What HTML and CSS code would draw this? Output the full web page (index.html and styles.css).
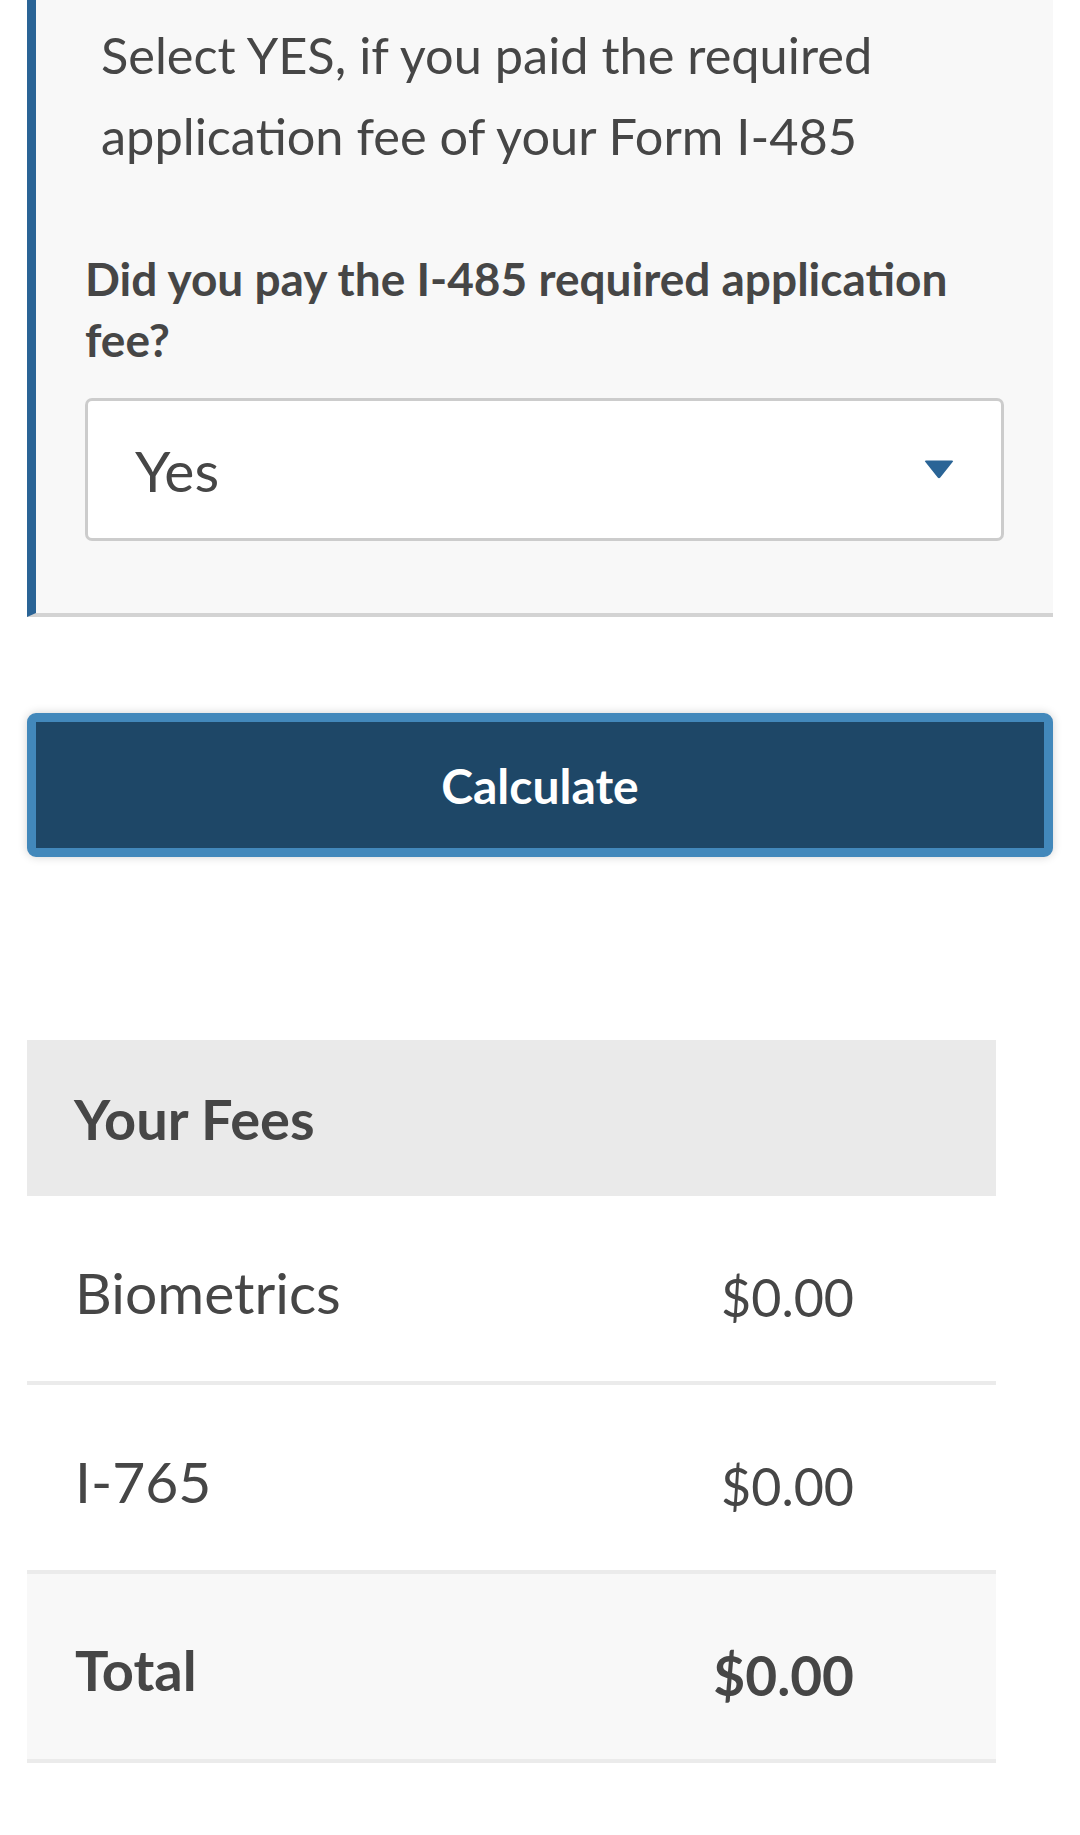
FILE: index.html
```html
<!DOCTYPE html>
<html lang="en">
<head>
<meta charset="utf-8">
<title>Fee Calculator</title>
<link rel="stylesheet" href="styles.css">
</head>
<body>
<main class="page">
  <section class="question-box">
    <p class="intro">Select YES, if you paid the required application fee of your Form I-485</p>
    <label class="q-label" for="paid">Did you pay the I-485 required application fee?</label>
    <div class="select">
      <span class="select-value" id="paid">Yes</span>
      <svg class="select-arrow" width="30" height="19" viewBox="0 0 30 19" aria-hidden="true">
        <path d="M2 0.5 H28 Q30 0.5 28.6 2 L16.3 17.6 Q15 19 13.7 17.6 L1.4 2 Q0 0.5 2 0.5 Z" fill="#2a6496"/>
      </svg>
    </div>
  </section>

  <button class="calc-btn" type="button">Calculate</button>

  <section class="fees">
    <div class="fees-head">Your Fees</div>
    <div class="fee-row">
      <span class="fee-name">Biometrics</span>
      <span class="fee-amount">$0.00</span>
    </div>
    <div class="fee-row">
      <span class="fee-name">I-765</span>
      <span class="fee-amount">$0.00</span>
    </div>
    <div class="fee-row fee-total">
      <span class="fee-name">Total</span>
      <span class="fee-amount">$0.00</span>
    </div>
  </section>
</main>
</body>
</html>
```
FILE: styles.css
```css
* { box-sizing: border-box; }

html, body {
  margin: 0;
  padding: 0;
  background: #ffffff;
}

body {
  font-family: "Lato", "Liberation Sans", sans-serif;
  color: #464646;
}

.page {
  padding: 0 27px;
}

/* grey question box with blue left rule */
.question-box {
  background: #f8f8f8;
  border-left: 9px solid #2a6496;
  border-bottom: 4px solid #d3d3d3;
  padding: 14px 49px 72px 49px;
}

.intro {
  margin: 0;
  padding-left: 16px;
  font-size: 50.5px;
  line-height: 81px;
  font-weight: 400;
  color: #464646;
}

.q-label {
  display: block;
  margin-top: 72px;
  font-size: 46px;
  line-height: 61px;
  font-weight: 700;
  color: #464646;
}

.select {
  margin-top: 28px;
  height: 143px;
  background: #ffffff;
  border: 3px solid #cccccc;
  border-radius: 7px;
  display: flex;
  align-items: center;
  justify-content: space-between;
  padding: 0 47px 0 47px;
}

.select-value {
  font-size: 57px;
  line-height: 1;
  color: #464646;
  padding-top: 2px;
}

.select-arrow {
  display: block;
}

/* Calculate button */
.calc-btn {
  display: flex;
  align-items: center;
  justify-content: center;
  width: 100%;
  height: 144px;
  margin-top: 96px;
  background: #1e4767;
  border: 9px solid #4288bb;
  border-radius: 9px;
  box-shadow: 0 0 10px rgba(0, 0, 0, 0.18);
  color: #ffffff;
  font-family: "Lato", "Liberation Sans", sans-serif;
  font-size: 48px;
  font-weight: 700;
  padding: 0;
}

/* fees table */
.fees {
  margin-top: 183px;
  width: 969px;
}

.fees-head {
  height: 156px;
  background: #eaeaea;
  display: flex;
  align-items: center;
  padding-left: 47px;
  font-size: 56px;
  font-weight: 700;
  color: #464646;
}

.fee-row {
  display: flex;
  align-items: center;
  justify-content: space-between;
  height: 189px;
  border-bottom: 4px solid #ebebeb;
  padding: 6px 142px 0 48px;
}

.fee-name {
  font-size: 57px;
  font-weight: 400;
}

.fee-amount {
  font-size: 52px;
  font-weight: 400;
  padding-top: 10px;
}

.fee-total {
  background: #f8f8f8;
}

.fee-total .fee-name {
  font-size: 56px;
  font-weight: 700;
}

.fee-total .fee-amount {
  font-size: 55px;
  font-weight: 700;
}
```
